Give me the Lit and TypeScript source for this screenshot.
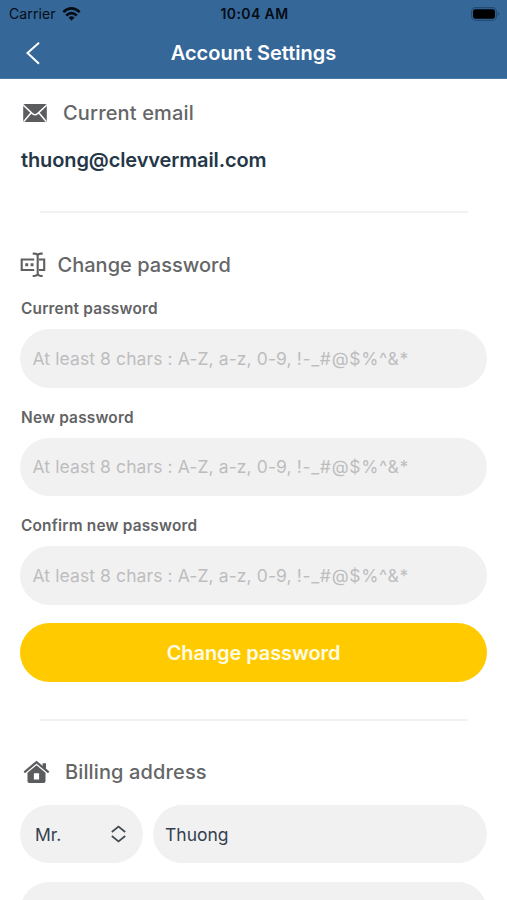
import { LitElement, html, css } from "lit";
import { customElement, property } from "lit/decorators.js";

@customElement("status-bar")
class StatusBar extends LitElement {
  static styles = css`
    :host { display: grid; grid-template-columns: 1fr auto 1fr; align-items: center; height: 27px; padding: 0 7px 0 9px; color: #050c14; font-size: 14px; }
    .left { display: flex; align-items: center; gap: 6px; letter-spacing: 0.1px; }
    .time { font-weight: 600; letter-spacing: 0.4px; }
    .battery { justify-self: end; }
    svg { display: block; }
  `;
  render() {
    return html`
      <div class="left"><span>Carrier</span>
        <svg width="19" height="14" viewBox="0 0 19 14">
          <g fill="none" stroke="#050c14" stroke-width="2.6">
            <path d="M1.3 5.1Q9.5-2.3 17.7 5.1"/><path d="M4.2 8.5Q9.5 3.7 14.8 8.5"/>
          </g>
          <path d="M9.5 13.7 6.5 10.6Q9.5 7.9 12.5 10.6Z" fill="#050c14"/>
        </svg>
      </div>
      <div class="time">10:04 AM</div>
      <svg class="battery" width="29" height="14" viewBox="0 0 29 14">
        <rect x=".6" y=".6" width="24.8" height="12.8" rx="4" fill="none" stroke="#234a70" stroke-width="1.1"/>
        <rect x="2" y="2.2" width="22" height="9.6" rx="2.3" fill="#000"/>
        <path d="M26.7 4.8q3 2.2 0 4.4z" fill="#234a70"/>
      </svg>`;
  }
}

@customElement("section-heading")
class SectionHeading extends LitElement {
  @property() icon = "mail";
  @property() label = "";
  static styles = css`
    :host { display: flex; align-items: center; height: 30px; color: #656667; font-size: 20px; font-weight: 550; white-space: nowrap; }
    svg { display: block; flex: none; }
    .mail { margin: 0 15px 0 2px; }
    .field { margin: 0 11.5px 0 0; }
    .home { margin: 0 15px 0 3px; }
    .mail + span { letter-spacing: 0.15px; }
    .field + span { letter-spacing: 0.02px; }
    .home + span { letter-spacing: 0.13px; }
  `;
  glyph() {
    if (this.icon === "mail")
      return html`<svg class="mail" width="26" height="20" viewBox="0 0 26 20">
        <rect x="1.2" y="1" width="23.6" height="18" rx="1.5" fill="#5b5c5e"/>
        <path d="M1.2 2 10.4 10.6Q13 13 15.6 10.6L24.8 2M1.8 18.4 9.2 9.8M24.2 18.4 16.8 9.8" fill="none" stroke="#fff" stroke-width="1.5"/>
      </svg>`;
    if (this.icon === "field")
      return html`<svg class="field" width="26" height="26" viewBox="0 0 26 26">
        <g fill="none" stroke="#5f6062" stroke-width="2.1">
          <path d="M14.2 7.5H1.7V18H14.2M19 7.5H24.2V18H19"/>
          <path d="M12.7 1.6H14.5Q17 1.6 17.7 3.4Q18.4 1.6 20.9 1.6H22.7M12.7 24H14.5Q17 24 17.7 22.2Q18.4 24 20.9 24H22.7M17.7 2.8V22.8"/>
        </g>
        <path d="M5.3 11.3h2.9v2.9H5.3zM10.6 11.3h2.9v2.9h-2.9z" fill="#5f6062"/>
      </svg>`;
    return html`<svg class="home" width="27" height="24" viewBox="0 0 27 24">
      <path d="M1.3 12.4 13.5 2.1 25.7 12.4" fill="none" stroke="#5b5c5e" stroke-width="2.2"/>
      <path d="M19.6 3.2h3.4v6.3l-3.4-2.9z" fill="#5b5c5e"/>
      <path fill-rule="evenodd" d="M4.5 12.7 13.5 5.2 22.5 12.7V21.3Q22.5 23 20.8 23H6.2Q4.5 23 4.5 21.3ZM10.9 13.2V19.4H16.1V13.2Z" fill="#5b5c5e"/>
    </svg>`;
  }
  render() { return html`${this.glyph()}<span>${this.label}</span>`; }
}

@customElement("password-field")
class PasswordField extends LitElement {
  @property() label = "";
  static styles = css`
    :host { display: block; height: 108.6px; }
    .label { height: 20px; line-height: 21px; margin-bottom: 11px; padding-left: 1px; color: #626365; font-size: 15.4px; font-weight: 600; letter-spacing: 0.2px; }
    .input { display: flex; align-items: center; height: 58.5px; box-sizing: border-box; padding-left: 12.5px; border-radius: 30px; background: #f1f1f1; color: #bdbdbf; font-size: 17.5px; letter-spacing: 0.1px; white-space: nowrap; }
    .symbols { letter-spacing: 0.7px; }
  `;
  render() {
    return html`<div class="label">${this.label}</div>
      <div class="input"><span>At least 8 chars : A-Z, a-z, 0-9, <span class="symbols">!-_#@$%^&amp;*</span></span></div>`;
  }
}

@customElement("app-root")
class AppRoot extends LitElement {
  static styles = css`
    :host { display: block; width: 507px; height: 900px; overflow: hidden; background: #fff; font-family: Inter, "Liberation Sans", sans-serif; }
    header { height: 79px; background: #356799; box-sizing: border-box; border-bottom: 1px solid #4d7aa7; }
    .nav { display: grid; grid-template-columns: 86px 1fr 86px; align-items: center; height: 51px; color: #fff; text-align: center; font-size: 20px; font-weight: 600; }
    .back { margin-left: 25px; display: block; }
    main { padding: 19px 20px 0; }
    .email { margin-top: 20px; height: 24px; line-height: 24px; padding-left: 1px; color: #253747; font-size: 20px; font-weight: 600; letter-spacing: -0.12px; }
    .rule { height: 2px; margin: 0 19px 0 20px; background: #f2f2f2; }
    .rule.first { margin-top: 39px; margin-bottom: 36.5px; }
    .rule.second { margin-top: 37.5px; margin-bottom: 36px; }
    .fields { margin-top: 18.5px; }
    .button { display: flex; align-items: center; justify-content: center; height: 58.5px; margin-top: -.3px; border-radius: 30px; background: #ffcb00; color: #fffbe5; font-size: 20px; font-weight: 580; letter-spacing: -0.08px; }
    .row { display: flex; gap: 10px; margin-top: 17.5px; }
    .pill { display: flex; align-items: center; justify-content: space-between; height: 58.5px; box-sizing: border-box; border-radius: 30px; background: #f1f1f1; color: #34404f; font-size: 17.5px; }
    .salutation { width: 122.5px; padding: 0 16px 0 15px; }
    .name { flex: 1; padding-left: 12.5px; }
    .next { margin-top: 18.5px; }
  `;
  render() {
    return html`
      <header>
        <status-bar></status-bar>
        <div class="nav">
          <svg class="back" width="16" height="24" viewBox="0 0 16 24"><path d="M14 1.8 2.5 12 14 22.8" fill="none" stroke="#fff" stroke-width="2"/></svg>
          <span>Account Settings</span>
        </div>
      </header>
      <main>
        <section-heading icon="mail" label="Current email"></section-heading>
        <div class="email">thuong@clevvermail.com</div>
        <div class="rule first"></div>
        <section-heading icon="field" label="Change password"></section-heading>
        <div class="fields">
          ${["Current password", "New password", "Confirm new password"].map((l) => html`<password-field .label=${l}></password-field>`)}
        </div>
        <div class="button">Change password</div>
        <div class="rule second"></div>
        <section-heading icon="home" label="Billing address"></section-heading>
        <div class="row">
          <div class="pill salutation"><span>Mr.</span>
            <svg width="17" height="18" viewBox="0 0 17 18"><path d="M1.8 7 8.5 1.6 15.2 7M1.8 11 8.5 16.4 15.2 11" fill="none" stroke="#414850" stroke-width="1.7"/></svg>
          </div>
          <div class="pill name"><span>Thuong</span></div>
        </div>
        <div class="pill next"></div>
      </main>`;
  }
}
